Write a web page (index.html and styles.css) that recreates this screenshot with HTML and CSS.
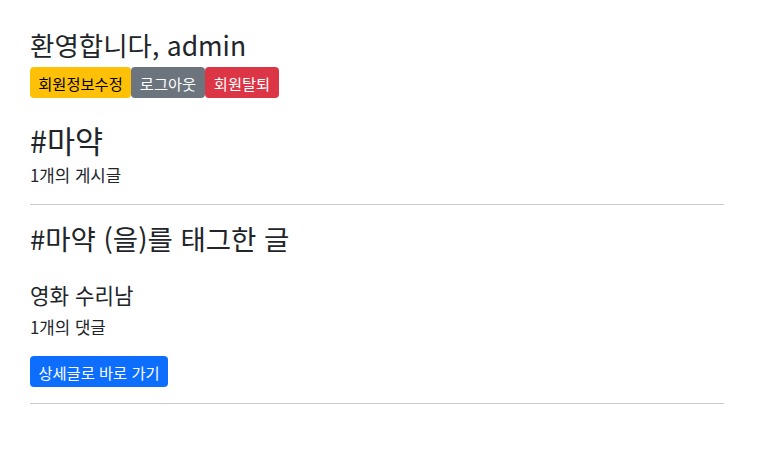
FILE: index.html
```html
<!DOCTYPE html>
<html lang="ko">
<head>
<meta charset="utf-8">
<title>태그</title>
<link rel="stylesheet" href="styles.css">
</head>
<body>
<main class="page">
  <h3 class="welcome">환영합니다, admin</h3>
  <div class="btn-row">
    <a class="btn btn-warning">회원정보수정</a>
    <a class="btn btn-secondary">로그아웃</a>
    <a class="btn btn-danger">회원탈퇴</a>
  </div>
  <h2 class="tag-title">#마약</h2>
  <p class="count">1개의 게시글</p>
  <hr class="rule">
  <h3 class="tagged">#마약 (을)를 태그한 글</h3>
  <section class="post">
    <h5 class="post-title">영화 수리남</h5>
    <p class="count">1개의 댓글</p>
    <div class="btn-row">
      <a class="btn btn-primary">상세글로 바로 가기</a>
    </div>
  </section>
  <hr class="rule">
</main>
</body>
</html>
```

FILE: styles.css
```css
* { box-sizing: border-box; }
html, body { margin: 0; padding: 0; background: #fff; }
body {
  font-family: "Segoe UI", "Noto Sans CJK KR", "Noto Sans", sans-serif;
  color: #212529;
}
.page {
  display: flex;
  flex-direction: column;
  align-items: stretch;
  padding: 30px 33px 0 30px;
}
h2, h3, h5, p { margin: 0; font-weight: 400; }
.welcome { font-size: 26.5px; line-height: 30px; }
.btn-row { display: flex; margin-top: 7px; }
.btn {
  display: inline-flex;
  align-items: center;
  justify-content: center;
  height: 31px;
  padding: 0 8px;
  font-size: 15.3px;
  border-radius: 4px;
  color: #fff;
  text-decoration: none;
}
.btn-warning { background: #ffc107; color: #000; width: 101px; }
.btn-secondary { background: #6c757d; width: 74px; }
.btn-danger { background: #dc3545; width: 74px; }
.btn-primary { background: #0d6efd; width: 138px; }
.tag-title { font-size: 30.5px; line-height: 34px; margin-top: 25px; }
.count { font-size: 16.8px; line-height: 24px; margin-top: 6px; }
.rule { border: 0; border-top: 1px solid #cccccc; margin: 17px 0 0; height: 0; }
.tagged { font-size: 27.5px; line-height: 30px; margin-top: 18px; }
.post { display: flex; flex-direction: column; }
.post-title { font-size: 21.2px; line-height: 24px; margin-top: 30px; }
.post .count { margin-top: 8px; }
.post .btn-row { margin-top: 17px; }
.post + .rule { margin-top: 16px; }
```
